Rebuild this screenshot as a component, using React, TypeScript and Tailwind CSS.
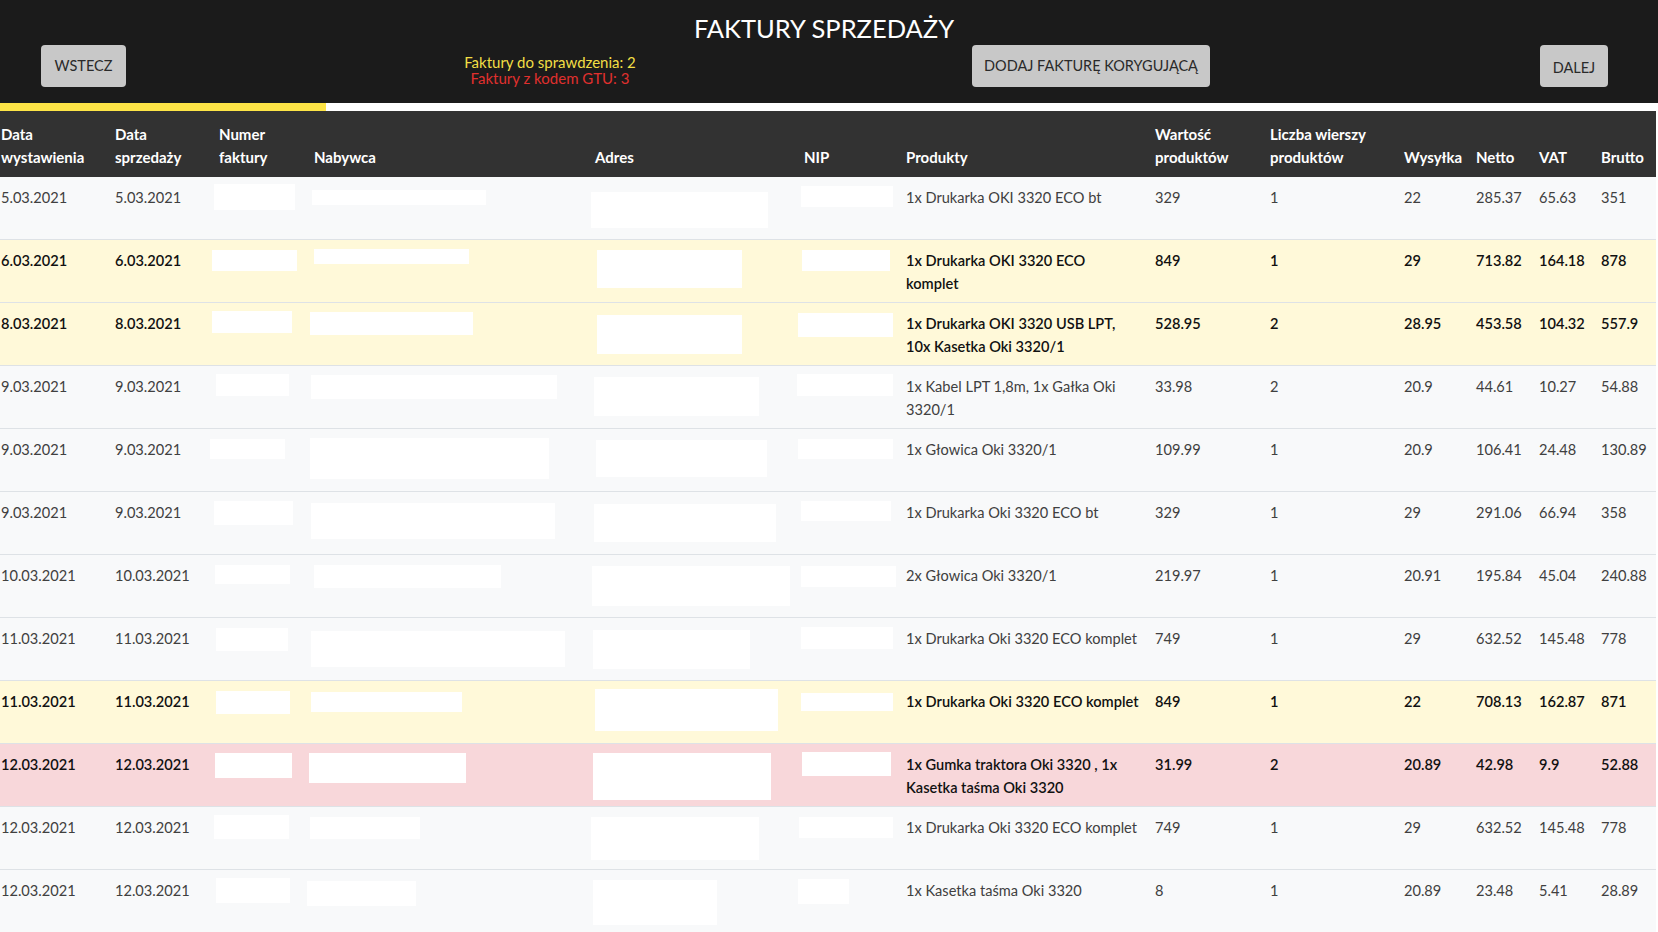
type Tone = "plain" | "warn" | "danger";

type Invoice = {
  issued: string;
  sold: string;
  products: string[];
  value: string;
  lines: string;
  shipping: string;
  net: string;
  vat: string;
  gross: string;
  tone: Tone;
  // redaction boxes: [left, top, width, height] in px, relative to row
  hidden: number[][];
};

const invoices: Invoice[] = [
  { issued: "5.03.2021", sold: "5.03.2021", products: ["1x Drukarka OKI 3320 ECO bt"], value: "329", lines: "1", shipping: "22", net: "285.37", vat: "65.63", gross: "351", tone: "plain",
    hidden: [[214, 7, 81, 26], [312, 13, 174, 15], [591, 15, 177, 36], [801, 9, 92, 21]] },
  { issued: "6.03.2021", sold: "6.03.2021", products: ["1x Drukarka OKI 3320 ECO", "komplet"], value: "849", lines: "1", shipping: "29", net: "713.82", vat: "164.18", gross: "878", tone: "warn",
    hidden: [[212, 10, 85, 21], [314, 9, 155, 15], [597, 10, 145, 38], [802, 10, 88, 21]] },
  { issued: "8.03.2021", sold: "8.03.2021", products: ["1x Drukarka OKI 3320 USB LPT,", "10x Kasetka Oki 3320/1"], value: "528.95", lines: "2", shipping: "28.95", net: "453.58", vat: "104.32", gross: "557.9", tone: "warn",
    hidden: [[212, 8, 80, 22], [310, 9, 163, 23], [597, 12, 145, 39], [798, 10, 95, 24]] },
  { issued: "9.03.2021", sold: "9.03.2021", products: ["1x Kabel LPT 1,8m, 1x Gałka Oki", "3320/1"], value: "33.98", lines: "2", shipping: "20.9", net: "44.61", vat: "10.27", gross: "54.88", tone: "plain",
    hidden: [[216, 8, 73, 22], [311, 9, 246, 24], [594, 11, 165, 39], [797, 8, 96, 22]] },
  { issued: "9.03.2021", sold: "9.03.2021", products: ["1x Głowica Oki 3320/1"], value: "109.99", lines: "1", shipping: "20.9", net: "106.41", vat: "24.48", gross: "130.89", tone: "plain",
    hidden: [[210, 10, 75, 20], [310, 9, 239, 41], [596, 11, 171, 37], [798, 10, 95, 20]] },
  { issued: "9.03.2021", sold: "9.03.2021", products: ["1x Drukarka Oki 3320 ECO bt"], value: "329", lines: "1", shipping: "29", net: "291.06", vat: "66.94", gross: "358", tone: "plain",
    hidden: [[214, 9, 79, 24], [311, 11, 244, 36], [594, 12, 182, 38], [801, 9, 90, 20]] },
  { issued: "10.03.2021", sold: "10.03.2021", products: ["2x Głowica Oki 3320/1"], value: "219.97", lines: "1", shipping: "20.91", net: "195.84", vat: "45.04", gross: "240.88", tone: "plain",
    hidden: [[215, 10, 75, 19], [314, 10, 187, 23], [592, 11, 198, 40], [801, 11, 95, 21]] },
  { issued: "11.03.2021", sold: "11.03.2021", products: ["1x Drukarka Oki 3320 ECO komplet"], value: "749", lines: "1", shipping: "29", net: "632.52", vat: "145.48", gross: "778", tone: "plain",
    hidden: [[216, 10, 72, 23], [311, 13, 254, 36], [593, 12, 157, 39], [801, 9, 92, 22]] },
  { issued: "11.03.2021", sold: "11.03.2021", products: ["1x Drukarka Oki 3320 ECO komplet"], value: "849", lines: "1", shipping: "22", net: "708.13", vat: "162.87", gross: "871", tone: "warn",
    hidden: [[216, 10, 74, 23], [311, 11, 151, 20], [595, 8, 183, 42], [801, 12, 92, 18]] },
  { issued: "12.03.2021", sold: "12.03.2021", products: ["1x Gumka traktora Oki 3320 , 1x", "Kasetka taśma Oki 3320"], value: "31.99", lines: "2", shipping: "20.89", net: "42.98", vat: "9.9", gross: "52.88", tone: "danger",
    hidden: [[215, 9, 77, 25], [309, 9, 157, 30], [593, 9, 178, 47], [802, 8, 89, 24]] },
  { issued: "12.03.2021", sold: "12.03.2021", products: ["1x Drukarka Oki 3320 ECO komplet"], value: "749", lines: "1", shipping: "29", net: "632.52", vat: "145.48", gross: "778", tone: "plain",
    hidden: [[214, 8, 75, 24], [310, 10, 110, 22], [591, 10, 168, 43], [799, 10, 94, 21]] },
  { issued: "12.03.2021", sold: "12.03.2021", products: ["1x Kasetka taśma Oki 3320"], value: "8", lines: "1", shipping: "20.89", net: "23.48", vat: "5.41", gross: "28.89", tone: "plain",
    hidden: [[216, 8, 74, 25], [307, 11, 109, 25], [593, 10, 124, 45], [798, 9, 51, 25]] },
];

const cols =
  "grid grid-cols-[114px_104px_95px_281px_209px_102px_249px_115px_134px_72px_63px_62px_56px]";

const toneClass: Record<Tone, string> = {
  plain: "bg-[#f8f9fa] text-[#404040] text-[14.6px]",
  warn: "bg-[#fff9d9] text-[#111] font-semibold text-[14.6px]",
  danger: "bg-[#f8d7da] text-[#111] font-semibold text-[14.6px]",
};

const headers: string[][] = [
  ["Data", "wystawienia"],
  ["Data", "sprzedaży"],
  ["Numer", "faktury"],
  ["Nabywca"],
  ["Adres"],
  ["NIP"],
  ["Produkty"],
  ["Wartość", "produktów"],
  ["Liczba wierszy", "produktów"],
  ["Wysyłka"],
  ["Netto"],
  ["VAT"],
  ["Brutto"],
];

const Btn = ({ label, className = "" }: { label: string; className?: string }) => (
  <button
    className={`h-[42px] rounded-[4px] bg-[#c8c8c8] text-[14.5px] text-[#2a2a2a] uppercase ${className}`}
  >
    {label}
  </button>
);

const TopBar = () => (
  <header className="h-[103px] bg-[#1b1b1b] pt-[14px]">
    <h1 className="text-center text-[25.5px] leading-[29px] text-white font-normal pr-[10px]">
      FAKTURY SPRZEDAŻY
    </h1>
    <div className="flex items-start pl-[41px] mt-[2px]">
      <Btn label="WSTECZ" className="w-[85px]" />
      <div className="ml-[324px] w-[200px] mt-[9px] text-center text-[15px] leading-[16px]">
        <div className="text-[#f2df45]">Faktury do sprawdzenia: 2</div>
        <div className="text-[#e0302e]">Faktury z kodem GTU: 3</div>
      </div>
      <Btn label="DODAJ FAKTURĘ KORYGUJĄCĄ" className="ml-[322px] w-[238px]" />
      <Btn label="DALEJ" className="ml-[330px] w-[68px] pt-[3px]" />
    </div>
  </header>
);

const Progress = () => (
  <div className="flex h-[8px] bg-white">
    <div className="w-[326px] bg-[#fde446]" />
  </div>
);

const TableHead = () => (
  <div className={`${cols} h-[66px] bg-[#323232] text-white font-bold text-[15px] leading-[23px]`}>
    {headers.map((h, i) => (
      <div key={i} className="flex flex-col justify-end pl-px pb-[8px] whitespace-nowrap">
        {h.map((l) => (
          <span key={l}>{l}</span>
        ))}
      </div>
    ))}
  </div>
);

const InvoiceRow = ({ inv }: { inv: Invoice }) => {
  const cells = [inv.issued, inv.sold, "", "", "", ""];
  return (
    <div
      className={`relative ${cols} h-[63px] border-b border-[#dee2e6] leading-[23px] ${toneClass[inv.tone]}`}
    >
      {cells.map((c, i) => (
        <div key={i} className="pl-px pt-[9px] whitespace-nowrap">
          {c}
        </div>
      ))}
      <div className="pl-px pt-[9px] whitespace-nowrap">
        {inv.products.map((p) => (
          <div key={p}>{p}</div>
        ))}
      </div>
      {[inv.value, inv.lines, inv.shipping, inv.net, inv.vat, inv.gross].map((c, i) => (
        <div key={i} className="pl-px pt-[9px] whitespace-nowrap">
          {c}
        </div>
      ))}
      {inv.hidden.map(([x, y, w, h], i) => (
        <div
          key={i}
          className="absolute bg-white"
          style={{ left: x, top: y, width: w, height: h }}
        />
      ))}
    </div>
  );
};

export default function App() {
  return (
    <div className="min-h-screen w-[1658px] bg-white font-['Lato',sans-serif] overflow-hidden">
      <TopBar />
      <div className="w-[1656px]">
        <Progress />
        <TableHead />
        {invoices.map((inv, i) => (
          <InvoiceRow key={i} inv={inv} />
        ))}
      </div>
    </div>
  );
}
